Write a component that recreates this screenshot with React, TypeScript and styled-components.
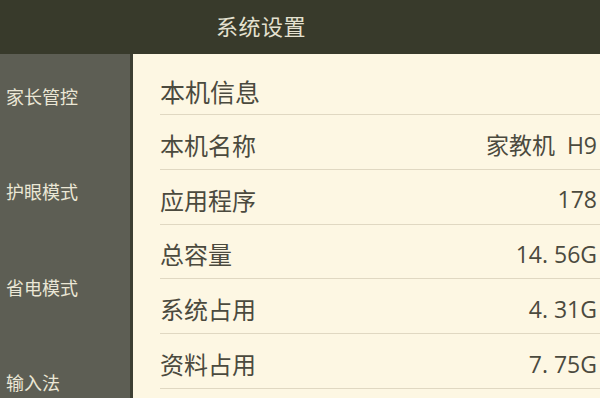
import { FC } from "react";
import styled, { createGlobalStyle } from "styled-components";

const GlobalStyle = createGlobalStyle`
  html, body {
    margin: 0;
    padding: 0;
    background: #383a2b;
  }
  body {
    font-family: "Noto Sans CJK SC", "Noto Sans", sans-serif;
  }
`;

const MENU = ["家长管控", "护眼模式", "省电模式", "输入法"];

const INFO: { label: string; value: string }[] = [
  { label: "本机名称", value: "家教机  H9" },
  { label: "应用程序", value: "178" },
  { label: "总容量", value: "14. 56G" },
  { label: "系统占用", value: "4. 31G" },
  { label: "资料占用", value: "7. 75G" },
];

const App: FC = () => {
  return (
    <>
      <GlobalStyle />
      <Screen>
        <Header>
          <HeaderTitle>系统设置</HeaderTitle>
        </Header>
        <Body>
          <Sidebar>
            {MENU.map((item) => (
              <MenuItem key={item}>{item}</MenuItem>
            ))}
          </Sidebar>
          <Panel>
            <SectionTitle>本机信息</SectionTitle>
            {INFO.map((row) => (
              <InfoRow key={row.label}>
                <Label>{row.label}</Label>
                <Value>{row.value}</Value>
              </InfoRow>
            ))}
          </Panel>
        </Body>
      </Screen>
    </>
  );
};

export default App;

const Screen = styled.div`
  width: 600px;
  height: 398px;
  display: flex;
  flex-direction: column;
  overflow: hidden;
`;

const Header = styled.div`
  height: 54px;
  background-color: #383a2b;
  display: flex;
  align-items: center;
  justify-content: center;
  flex-shrink: 0;
`;

const HeaderTitle = styled.div`
  font-size: 22px;
  color: #e4e1d0;
  margin-left: -78px;
  margin-top: -4px;
  letter-spacing: 0.5px;
`;

const Body = styled.div`
  flex: 1;
  display: flex;
  min-height: 0;
`;

const Sidebar = styled.div`
  width: 130px;
  flex-shrink: 0;
  background-color: #5d5e54;
  display: flex;
  flex-direction: column;
`;

const MenuItem = styled.div`
  height: 95.3px;
  flex-shrink: 0;
  display: flex;
  align-items: center;
  padding: 0 0 11px 6px;
  box-sizing: border-box;
  font-size: 18px;
  color: #ebe7d6;
`;

const Panel = styled.div`
  flex: 1;
  background-color: #fdf7e3;
  border-left: 3px solid #3d3f33;
  padding-left: 27px;
  display: flex;
  flex-direction: column;
  color: #4b4a3e;
`;

const SectionTitle = styled.div`
  height: 61px;
  box-sizing: border-box;
  border-bottom: 1px solid #e0d8c2;
  display: flex;
  align-items: flex-end;
  padding-bottom: 5px;
  font-size: 25px;
  flex-shrink: 0;
`;

const InfoRow = styled.div`
  height: 54.8px;
  box-sizing: border-box;
  flex-shrink: 0;
  display: flex;
  align-items: center;
  justify-content: space-between;
  padding: 5px 3px 0 0;
  border-bottom: 1px solid #e0d8c2;
`;

const Label = styled.div`
  font-size: 24px;
`;

const Value = styled.div`
  font-family: "Open Sans", "Noto Sans CJK SC", sans-serif;
  font-size: 23px;
  white-space: pre;
`;
